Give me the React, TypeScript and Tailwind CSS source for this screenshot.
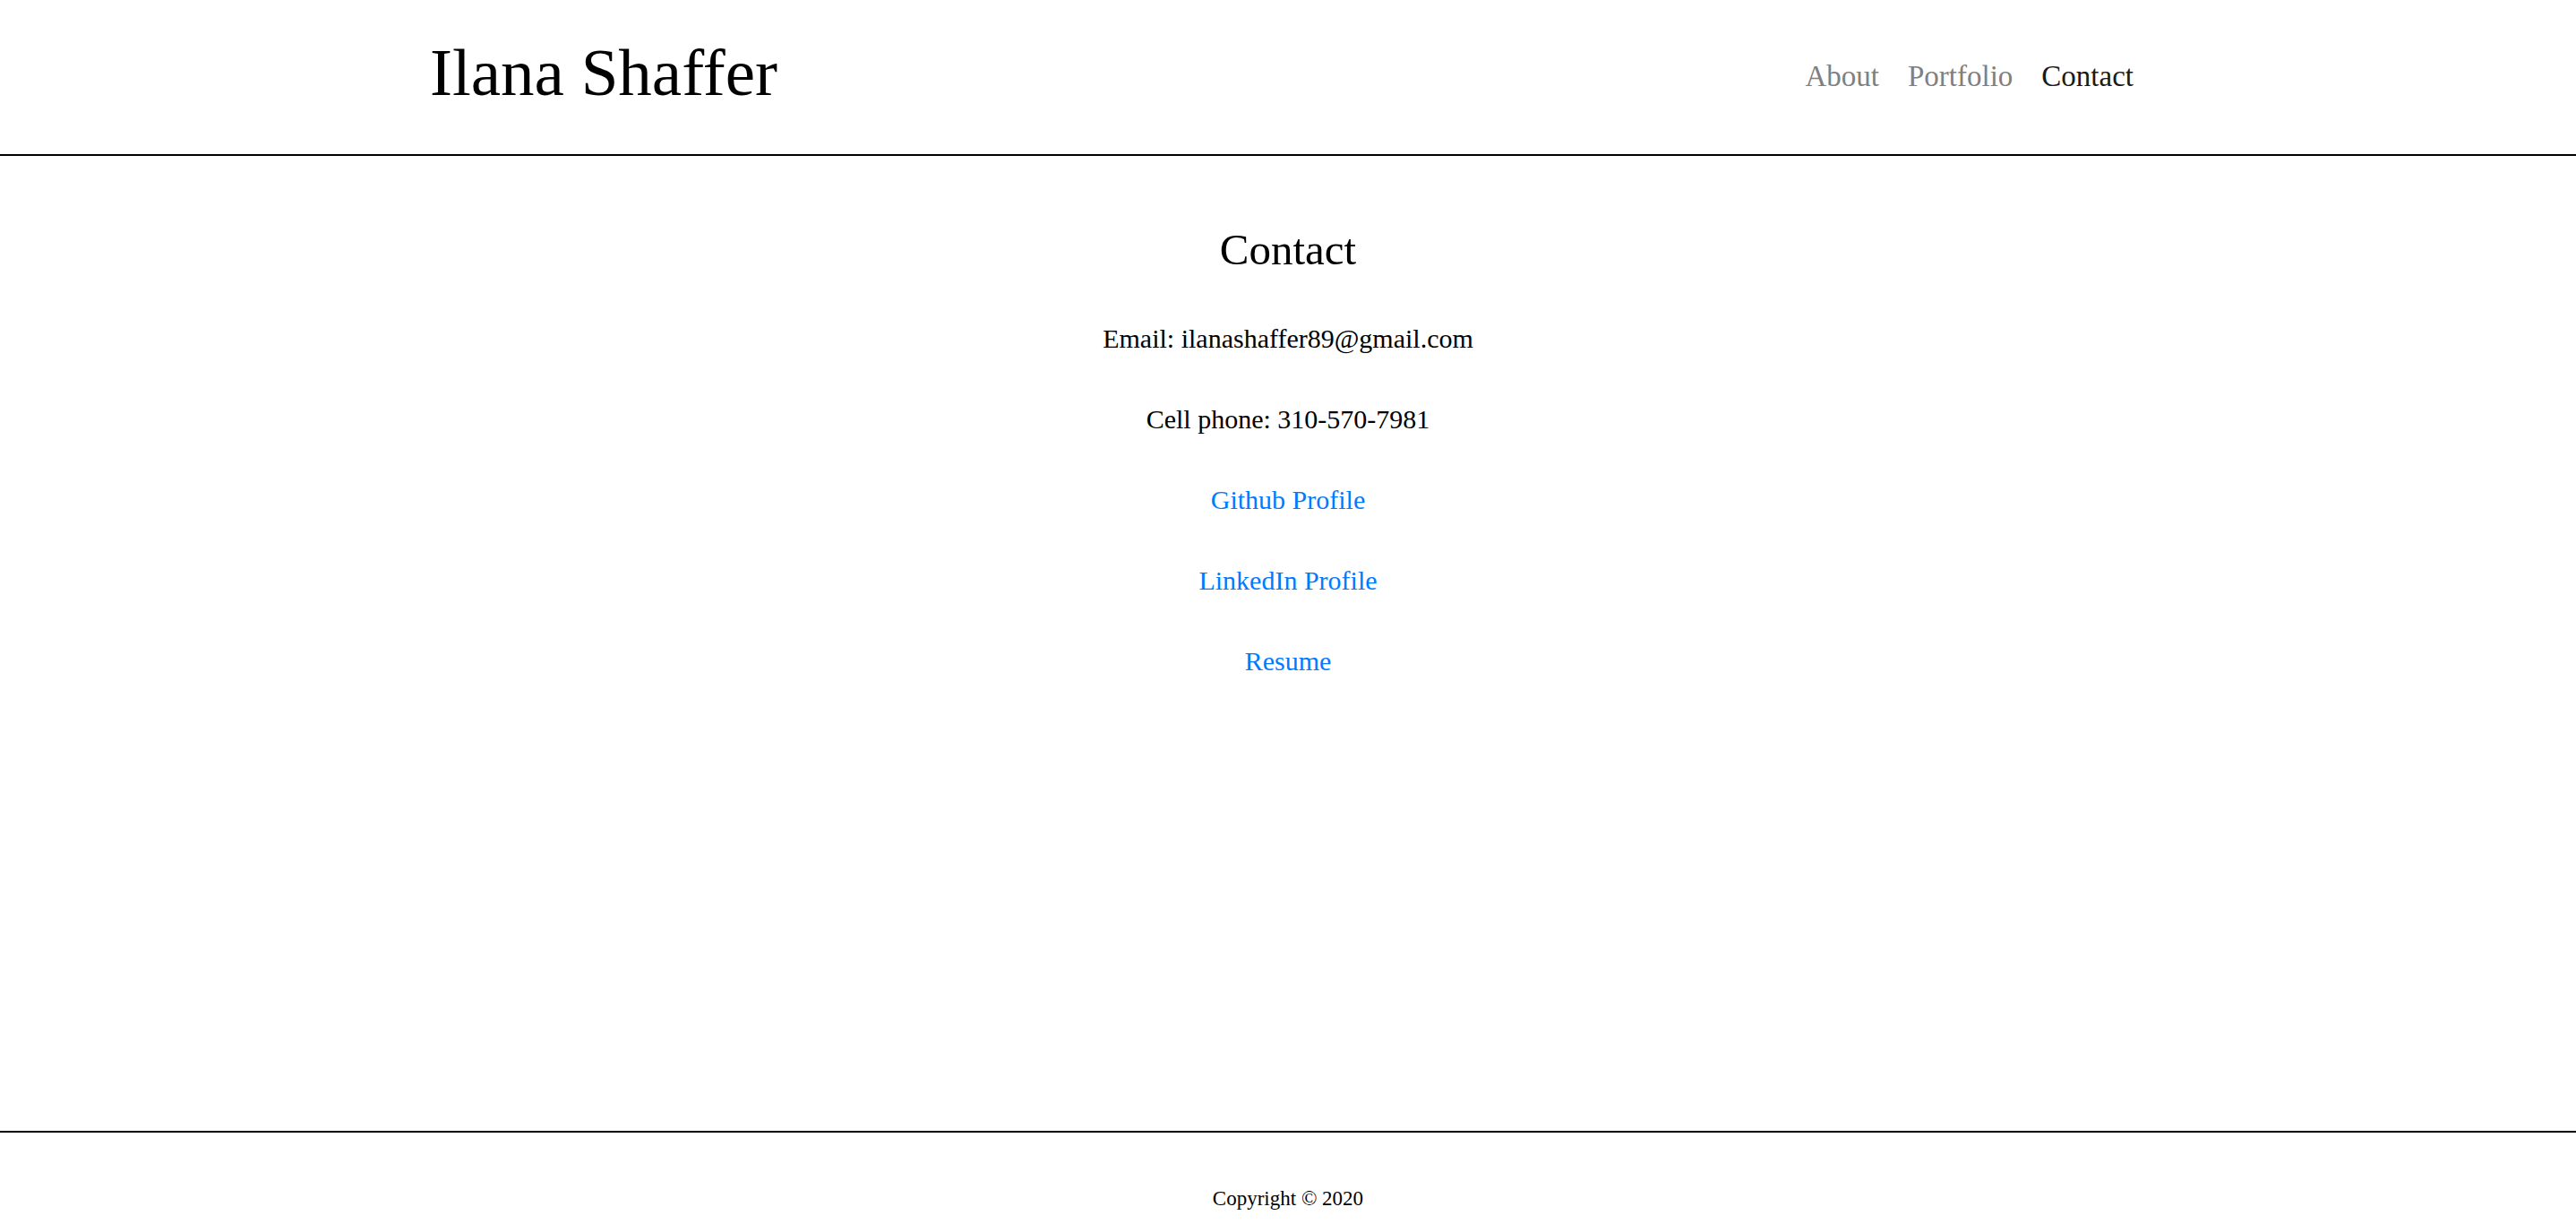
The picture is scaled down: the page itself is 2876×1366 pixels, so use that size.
export default function App() {
  const serif = { fontFamily: '"Liberation Serif", "Times New Roman", serif' };
  return (
    <div className="min-h-screen flex flex-col bg-white text-black" style={serif}>
      <header className="h-[174px] border-b-2 border-black">
        <div className="max-w-[1920px] mx-auto flex items-start justify-between">
          <a className="mt-[43px] ml-[2px] text-[75px] leading-[75px] text-black">Ilana Shaffer</a>
          <nav className="mt-[69px] flex">
            <a className="px-4 text-[33px] leading-[33px] text-[#808080]">About</a>
            <a className="px-4 text-[33px] leading-[33px] text-[#808080]">Portfolio</a>
            <a className="px-4 text-[33px] leading-[33px] text-[#1a1a1a]">Contact</a>
          </nav>
        </div>
      </header>
      <main className="flex-1 flex flex-col items-center pt-[80px] gap-[60px] text-center">
        <h1 className="text-[49px] leading-[49px]">Contact</h1>
        <p className="text-[30px] leading-[30px]">Email: ilanashaffer89@gmail.com</p>
        <p className="text-[30px] leading-[30px]">Cell phone: 310-570-7981</p>
        <a className="text-[30px] leading-[30px] text-[#007bff]">Github Profile</a>
        <a className="text-[30px] leading-[30px] text-[#007bff]">LinkedIn Profile</a>
        <a className="text-[30px] leading-[30px] text-[#007bff]">Resume</a>
      </main>
      <footer className="h-[104px] border-t-2 border-black flex justify-center pt-[62px]">
        <p className="text-[23px] leading-[23px]">Copyright © 2020</p>
      </footer>
    </div>
  );
}
